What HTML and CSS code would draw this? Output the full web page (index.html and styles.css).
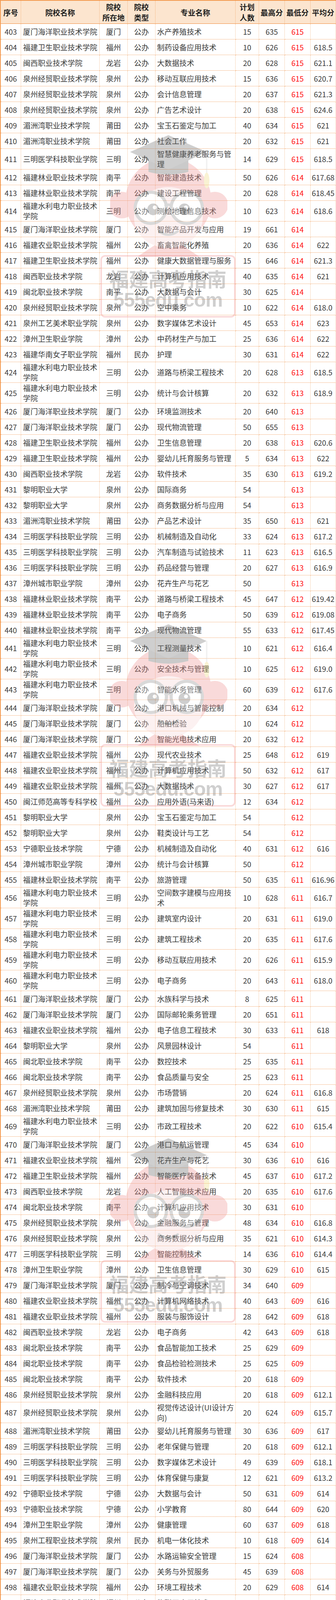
FILE: index.html
```html
<!DOCTYPE html>
<html lang="zh-CN">
<head>
<meta charset="utf-8">
<title>福建高职院校专业录取分数</title>
<link rel="stylesheet" href="styles.css">
</head>
<body>
<svg class="defs" width="0" height="0" aria-hidden="true">
  <defs>
    <symbol id="monkey" viewBox="0 0 300 315">
      <circle cx="30" cy="183" r="34" fill="#ee8e8e"/>
      <circle cx="268" cy="183" r="34" fill="#ee8e8e"/>
      <path d="M70 315 L149 262 L228 315 Z" fill="#ee8e8e"/>
      <circle cx="149" cy="172" r="110" fill="#ee8e8e"/>
      <ellipse cx="149" cy="215" rx="88" ry="78" fill="#f8d6d6"/>
      <circle cx="104" cy="190" r="40" fill="#fff" stroke="#8c8c8c" stroke-width="8"/>
      <circle cx="196" cy="190" r="40" fill="#fff" stroke="#8c8c8c" stroke-width="8"/>
      <path d="M140 186 Q149 178 158 186" fill="none" stroke="#8c8c8c" stroke-width="6"/>
      <circle cx="110" cy="194" r="15" fill="#6a6a6a"/>
      <circle cx="190" cy="194" r="15" fill="#6a6a6a"/>
      <circle cx="114" cy="189" r="5" fill="#fff"/>
      <circle cx="194" cy="189" r="5" fill="#fff"/>
      <path d="M125 250 Q149 268 173 250" fill="none" stroke="#8c8c8c" stroke-width="6" stroke-linecap="round"/>
      <path d="M98 40 L200 40 L200 98 Q149 112 98 98 Z" fill="#5e5e5e"/>
      <path d="M51 47 L149 4 L247 47 L149 92 Z" fill="#6e6e6e"/>
      <path d="M247 47 L247 112" stroke="#d8d8d8" stroke-width="4"/>
      <ellipse cx="247" cy="120" rx="7" ry="20" fill="#efd77a"/>
    </symbol>
  </defs>
</svg>
<div class="page">
<table class="score">
<colgroup>
<col class="c1"><col class="c2"><col class="c3"><col class="c4"><col class="c5"><col class="c6"><col class="c7"><col class="c8"><col class="c9">
</colgroup>
<thead>
<tr><th>序号</th><th>院校名称</th><th>院校<br>所在地</th><th>院校<br>类型</th><th>专业名称</th><th>计划<br>人数</th><th>最高分</th><th>最低分</th><th>平均分</th></tr>
</thead>
<tbody>
<tr><td>403</td><td>厦门海洋职业技术学院</td><td>厦门</td><td>公办</td><td>水产养殖技术</td><td>15</td><td>635</td><td>615</td><td></td></tr>
<tr><td>404</td><td>福建卫生职业技术学院</td><td>福州</td><td>公办</td><td>制药设备应用技术</td><td>10</td><td>626</td><td>615</td><td>618.5</td></tr>
<tr><td>405</td><td>闽西职业技术学院</td><td>龙岩</td><td>公办</td><td>大数据技术</td><td>20</td><td>628</td><td>615</td><td>621.1</td></tr>
<tr><td>406</td><td>泉州经贸职业技术学院</td><td>泉州</td><td>公办</td><td>移动互联应用技术</td><td>15</td><td>636</td><td>615</td><td>620.7</td></tr>
<tr><td>407</td><td>泉州经贸职业技术学院</td><td>泉州</td><td>公办</td><td>会计信息管理</td><td>20</td><td>637</td><td>615</td><td>621.3</td></tr>
<tr><td>408</td><td>泉州经贸职业技术学院</td><td>泉州</td><td>公办</td><td>广告艺术设计</td><td>20</td><td>638</td><td>615</td><td>624.6</td></tr>
<tr><td>409</td><td>湄洲湾职业技术学院</td><td>莆田</td><td>公办</td><td>宝玉石鉴定与加工</td><td>40</td><td>634</td><td>615</td><td>621</td></tr>
<tr><td>410</td><td>湄洲湾职业技术学院</td><td>莆田</td><td>公办</td><td>社会工作</td><td>20</td><td>632</td><td>615</td><td>621</td></tr>
<tr><td>411</td><td>三明医学科技职业学院</td><td>三明</td><td>公办</td><td>智慧健康养老服务与管理</td><td>14</td><td>629</td><td>615</td><td>618.5</td></tr>
<tr><td>412</td><td>福建林业职业技术学院</td><td>南平</td><td>公办</td><td>智能建造技术</td><td>50</td><td>626</td><td>614</td><td>617.68</td></tr>
<tr><td>413</td><td>福建林业职业技术学院</td><td>南平</td><td>公办</td><td>建设工程管理</td><td>20</td><td>628</td><td>614</td><td>618.45</td></tr>
<tr><td>414</td><td>福建水利电力职业技术学院</td><td>三明</td><td>公办</td><td>测绘地理信息技术</td><td>10</td><td>623</td><td>614</td><td>618.6</td></tr>
<tr><td>415</td><td>厦门海洋职业技术学院</td><td>厦门</td><td>公办</td><td>智能产品开发与应用</td><td>19</td><td>661</td><td>614</td><td></td></tr>
<tr><td>416</td><td>福建农业职业技术学院</td><td>福州</td><td>公办</td><td>畜禽智能化养殖</td><td>20</td><td>636</td><td>614</td><td>622</td></tr>
<tr><td>417</td><td>福建卫生职业技术学院</td><td>福州</td><td>公办</td><td>健康大数据管理与服务</td><td>15</td><td>646</td><td>614</td><td>621.3</td></tr>
<tr><td>418</td><td>闽西职业技术学院</td><td>龙岩</td><td>公办</td><td>计算机应用技术</td><td>40</td><td>635</td><td>614</td><td>621</td></tr>
<tr><td>419</td><td>闽北职业技术学院</td><td>南平</td><td>公办</td><td>大数据与会计</td><td>30</td><td>625</td><td>614</td><td></td></tr>
<tr><td>420</td><td>泉州经贸职业技术学院</td><td>泉州</td><td>公办</td><td>空中乘务</td><td>10</td><td>622</td><td>614</td><td>618.0</td></tr>
<tr><td>421</td><td>泉州工艺美术职业学院</td><td>泉州</td><td>公办</td><td>数字媒体艺术设计</td><td>45</td><td>653</td><td>614</td><td>623</td></tr>
<tr><td>422</td><td>漳州卫生职业学院</td><td>漳州</td><td>公办</td><td>中药材生产与加工</td><td>25</td><td>636</td><td>614</td><td>622</td></tr>
<tr><td>423</td><td>福建华南女子职业学院</td><td>福州</td><td>民办</td><td>护理</td><td>30</td><td>631</td><td>614</td><td>622</td></tr>
<tr><td>424</td><td>福建水利电力职业技术学院</td><td>三明</td><td>公办</td><td>道路与桥梁工程技术</td><td>20</td><td>628</td><td>613</td><td>618.5</td></tr>
<tr><td>425</td><td>福建水利电力职业技术学院</td><td>三明</td><td>公办</td><td>统计与会计核算</td><td>20</td><td>632</td><td>613</td><td>618.9</td></tr>
<tr><td>426</td><td>厦门海洋职业技术学院</td><td>厦门</td><td>公办</td><td>环境监测技术</td><td>20</td><td>640</td><td>613</td><td></td></tr>
<tr><td>427</td><td>厦门海洋职业技术学院</td><td>厦门</td><td>公办</td><td>现代物流管理</td><td>50</td><td>655</td><td>613</td><td></td></tr>
<tr><td>428</td><td>福建卫生职业技术学院</td><td>福州</td><td>公办</td><td>卫生信息管理</td><td>20</td><td>638</td><td>613</td><td>620.6</td></tr>
<tr><td>429</td><td>福建卫生职业技术学院</td><td>福州</td><td>公办</td><td>婴幼儿托育服务与管理</td><td>5</td><td>634</td><td>613</td><td>622</td></tr>
<tr><td>430</td><td>闽西职业技术学院</td><td>龙岩</td><td>公办</td><td>软件技术</td><td>35</td><td>630</td><td>613</td><td>619.2</td></tr>
<tr><td>431</td><td>黎明职业大学</td><td>泉州</td><td>公办</td><td>国际商务</td><td>54</td><td></td><td>613</td><td></td></tr>
<tr><td>432</td><td>黎明职业大学</td><td>泉州</td><td>公办</td><td>商务数据分析与应用</td><td>54</td><td></td><td>613</td><td></td></tr>
<tr><td>433</td><td>湄洲湾职业技术学院</td><td>莆田</td><td>公办</td><td>产品艺术设计</td><td>35</td><td>650</td><td>613</td><td>621</td></tr>
<tr><td>434</td><td>三明医学科技职业学院</td><td>三明</td><td>公办</td><td>机械制造及自动化</td><td>33</td><td>624</td><td>613</td><td>617.2</td></tr>
<tr><td>435</td><td>三明医学科技职业学院</td><td>三明</td><td>公办</td><td>汽车制造与试验技术</td><td>11</td><td>623</td><td>613</td><td>616.5</td></tr>
<tr><td>436</td><td>三明医学科技职业学院</td><td>三明</td><td>公办</td><td>药品经营与管理</td><td>20</td><td>627</td><td>613</td><td>616.9</td></tr>
<tr><td>437</td><td>漳州城市职业学院</td><td>漳州</td><td>公办</td><td>花卉生产与花艺</td><td>50</td><td></td><td>613</td><td></td></tr>
<tr><td>438</td><td>福建林业职业技术学院</td><td>南平</td><td>公办</td><td>道路与桥梁工程技术</td><td>45</td><td>647</td><td>612</td><td>619.42</td></tr>
<tr><td>439</td><td>福建林业职业技术学院</td><td>南平</td><td>公办</td><td>电子商务</td><td>50</td><td>639</td><td>612</td><td>619.08</td></tr>
<tr><td>440</td><td>福建林业职业技术学院</td><td>南平</td><td>公办</td><td>现代物流管理</td><td>55</td><td>633</td><td>612</td><td>617.45</td></tr>
<tr><td>441</td><td>福建水利电力职业技术学院</td><td>三明</td><td>公办</td><td>工程测量技术</td><td>10</td><td>621</td><td>612</td><td>616.4</td></tr>
<tr><td>442</td><td>福建水利电力职业技术学院</td><td>三明</td><td>公办</td><td>安全技术与管理</td><td>10</td><td>625</td><td>612</td><td>619.0</td></tr>
<tr><td>443</td><td>福建水利电力职业技术学院</td><td>三明</td><td>公办</td><td>智能水务管理</td><td>60</td><td>639</td><td>612</td><td>617.6</td></tr>
<tr><td>444</td><td>厦门海洋职业技术学院</td><td>厦门</td><td>公办</td><td>港口机械与智能控制</td><td>20</td><td>634</td><td>612</td><td></td></tr>
<tr><td>445</td><td>厦门海洋职业技术学院</td><td>厦门</td><td>公办</td><td>船舶检验</td><td>10</td><td>624</td><td>612</td><td></td></tr>
<tr><td>446</td><td>厦门海洋职业技术学院</td><td>厦门</td><td>公办</td><td>智能光电技术应用</td><td>20</td><td>632</td><td>612</td><td></td></tr>
<tr><td>447</td><td>福建农业职业技术学院</td><td>福州</td><td>公办</td><td>现代农业技术</td><td>25</td><td>648</td><td>612</td><td>619</td></tr>
<tr><td>448</td><td>福建农业职业技术学院</td><td>福州</td><td>公办</td><td>计算机应用技术</td><td>50</td><td>632</td><td>612</td><td>617</td></tr>
<tr><td>449</td><td>福建农业职业技术学院</td><td>福州</td><td>公办</td><td>大数据技术</td><td>30</td><td>627</td><td>612</td><td>617</td></tr>
<tr><td>450</td><td>闽江师范高等专科学校</td><td>福州</td><td>公办</td><td>应用外语(马来语)</td><td>12</td><td>634</td><td>612</td><td></td></tr>
<tr><td>451</td><td>黎明职业大学</td><td>泉州</td><td>公办</td><td>宝玉石鉴定与加工</td><td>54</td><td></td><td>612</td><td></td></tr>
<tr><td>452</td><td>黎明职业大学</td><td>泉州</td><td>公办</td><td>鞋类设计与工艺</td><td>54</td><td></td><td>612</td><td></td></tr>
<tr><td>453</td><td>宁德职业技术学院</td><td>宁德</td><td>公办</td><td>机械制造及自动化</td><td>40</td><td>631</td><td>612</td><td>616</td></tr>
<tr><td>454</td><td>漳州城市职业学院</td><td>漳州</td><td>公办</td><td>统计与会计核算</td><td>50</td><td></td><td>612</td><td></td></tr>
<tr><td>455</td><td>福建林业职业技术学院</td><td>南平</td><td>公办</td><td>旅游管理</td><td>50</td><td>635</td><td>611</td><td>616.96</td></tr>
<tr><td>456</td><td>福建水利电力职业技术学院</td><td>三明</td><td>公办</td><td>空间数字建模与应用技术</td><td>10</td><td>628</td><td>611</td><td>616.7</td></tr>
<tr><td>457</td><td>福建水利电力职业技术学院</td><td>三明</td><td>公办</td><td>建筑室内设计</td><td>20</td><td>631</td><td>611</td><td>619.0</td></tr>
<tr><td>458</td><td>福建水利电力职业技术学院</td><td>三明</td><td>公办</td><td>建筑工程技术</td><td>20</td><td>635</td><td>611</td><td>617.6</td></tr>
<tr><td>459</td><td>福建水利电力职业技术学院</td><td>三明</td><td>公办</td><td>移动互联应用技术</td><td>20</td><td>626</td><td>611</td><td>615.9</td></tr>
<tr><td>460</td><td>福建水利电力职业技术学院</td><td>三明</td><td>公办</td><td>电子商务</td><td>20</td><td>643</td><td>611</td><td>618.0</td></tr>
<tr><td>461</td><td>厦门海洋职业技术学院</td><td>厦门</td><td>公办</td><td>水族科学与技术</td><td>8</td><td>625</td><td>611</td><td></td></tr>
<tr><td>462</td><td>厦门海洋职业技术学院</td><td>厦门</td><td>公办</td><td>国际邮轮乘务管理</td><td>20</td><td>651</td><td>611</td><td></td></tr>
<tr><td>463</td><td>福建农业职业技术学院</td><td>福州</td><td>公办</td><td>电子信息工程技术</td><td>30</td><td>633</td><td>611</td><td>618</td></tr>
<tr><td>464</td><td>黎明职业大学</td><td>泉州</td><td>公办</td><td>风景园林设计</td><td>54</td><td></td><td>611</td><td></td></tr>
<tr><td>465</td><td>闽北职业技术学院</td><td>南平</td><td>公办</td><td>数控技术</td><td>25</td><td>635</td><td>611</td><td></td></tr>
<tr><td>466</td><td>闽北职业技术学院</td><td>南平</td><td>公办</td><td>食品质量与安全</td><td>25</td><td>623</td><td>611</td><td></td></tr>
<tr><td>467</td><td>泉州经贸职业技术学院</td><td>泉州</td><td>公办</td><td>市场营销</td><td>20</td><td>624</td><td>611</td><td>616.8</td></tr>
<tr><td>468</td><td>湄洲湾职业技术学院</td><td>莆田</td><td>公办</td><td>建筑加固与修复技术</td><td>30</td><td>630</td><td>611</td><td>615</td></tr>
<tr><td>469</td><td>福建水利电力职业技术学院</td><td>三明</td><td>公办</td><td>市政工程技术</td><td>20</td><td>622</td><td>610</td><td>615.4</td></tr>
<tr><td>470</td><td>厦门海洋职业技术学院</td><td>厦门</td><td>公办</td><td>港口与航运管理</td><td>45</td><td>634</td><td>610</td><td></td></tr>
<tr><td>471</td><td>福建农业职业技术学院</td><td>福州</td><td>公办</td><td>花卉生产与花艺</td><td>30</td><td>636</td><td>610</td><td>616</td></tr>
<tr><td>472</td><td>福建卫生职业技术学院</td><td>福州</td><td>公办</td><td>智能医疗装备技术</td><td>45</td><td>637</td><td>610</td><td>617.2</td></tr>
<tr><td>473</td><td>闽西职业技术学院</td><td>龙岩</td><td>公办</td><td>人工智能技术应用</td><td>20</td><td>635</td><td>610</td><td>617.6</td></tr>
<tr><td>474</td><td>闽北职业技术学院</td><td>南平</td><td>公办</td><td>计算机应用技术</td><td>30</td><td>631</td><td>610</td><td></td></tr>
<tr><td>475</td><td>泉州经贸职业技术学院</td><td>泉州</td><td>公办</td><td>金融服务与管理</td><td>48</td><td>634</td><td>610</td><td>616.8</td></tr>
<tr><td>476</td><td>泉州经贸职业技术学院</td><td>泉州</td><td>公办</td><td>商务数据分析与应用</td><td>35</td><td>621</td><td>610</td><td>614.3</td></tr>
<tr><td>477</td><td>三明医学科技职业学院</td><td>三明</td><td>公办</td><td>智能控制技术</td><td>14</td><td>636</td><td>610</td><td>614.4</td></tr>
<tr><td>478</td><td>漳州卫生职业学院</td><td>漳州</td><td>公办</td><td>卫生信息管理</td><td>30</td><td>629</td><td>610</td><td>615</td></tr>
<tr><td>479</td><td>厦门海洋职业技术学院</td><td>厦门</td><td>公办</td><td>制冷与空调技术</td><td>34</td><td>640</td><td>609</td><td></td></tr>
<tr><td>480</td><td>福建农业职业技术学院</td><td>福州</td><td>公办</td><td>计算机网络技术</td><td>40</td><td>643</td><td>609</td><td>616</td></tr>
<tr><td>481</td><td>福建农业职业技术学院</td><td>福州</td><td>公办</td><td>服装与服饰设计</td><td>28</td><td>642</td><td>609</td><td>618</td></tr>
<tr><td>482</td><td>闽西职业技术学院</td><td>龙岩</td><td>公办</td><td>电子商务</td><td>42</td><td>643</td><td>609</td><td>618</td></tr>
<tr><td>483</td><td>闽北职业技术学院</td><td>南平</td><td>公办</td><td>食品智能加工技术</td><td>25</td><td>629</td><td>609</td><td></td></tr>
<tr><td>484</td><td>闽北职业技术学院</td><td>南平</td><td>公办</td><td>食品检验检测技术</td><td>25</td><td>625</td><td>609</td><td></td></tr>
<tr><td>485</td><td>闽北职业技术学院</td><td>南平</td><td>公办</td><td>软件技术</td><td>20</td><td>618</td><td>609</td><td></td></tr>
<tr><td>486</td><td>泉州经贸职业技术学院</td><td>泉州</td><td>公办</td><td>金融科技应用</td><td>20</td><td>618</td><td>609</td><td>612.1</td></tr>
<tr><td>487</td><td>泉州经贸职业技术学院</td><td>泉州</td><td>公办</td><td>视觉传达设计(UI设计方向)</td><td>20</td><td>624</td><td>609</td><td>615.7</td></tr>
<tr><td>488</td><td>湄洲湾职业技术学院</td><td>莆田</td><td>公办</td><td>婴幼儿托育服务与管理</td><td>30</td><td>636</td><td>609</td><td>617</td></tr>
<tr><td>489</td><td>三明医学科技职业学院</td><td>三明</td><td>公办</td><td>老年保健与管理</td><td>20</td><td>618</td><td>609</td><td>612.1</td></tr>
<tr><td>490</td><td>三明医学科技职业学院</td><td>三明</td><td>公办</td><td>数字媒体艺术设计</td><td>49</td><td>639</td><td>609</td><td>618.1</td></tr>
<tr><td>491</td><td>三明医学科技职业学院</td><td>三明</td><td>公办</td><td>体育保健与康复</td><td>12</td><td>621</td><td>609</td><td>613.2</td></tr>
<tr><td>492</td><td>宁德职业技术学院</td><td>宁德</td><td>公办</td><td>大数据与会计</td><td>50</td><td>631</td><td>609</td><td>614</td></tr>
<tr><td>493</td><td>宁德职业技术学院</td><td>宁德</td><td>公办</td><td>小学教育</td><td>80</td><td>644</td><td>609</td><td>620</td></tr>
<tr><td>494</td><td>漳州卫生职业学院</td><td>漳州</td><td>公办</td><td>健康管理</td><td>60</td><td>637</td><td>609</td><td>618</td></tr>
<tr><td>495</td><td>泉州工程职业技术学院</td><td>泉州</td><td>民办</td><td>机电一体化技术</td><td>10</td><td>618</td><td>609</td><td>614</td></tr>
<tr><td>496</td><td>厦门海洋职业技术学院</td><td>厦门</td><td>公办</td><td>水路运输安全管理</td><td>15</td><td>624</td><td>608</td><td></td></tr>
<tr><td>497</td><td>厦门海洋职业技术学院</td><td>厦门</td><td>公办</td><td>关务与外贸服务</td><td>45</td><td>639</td><td>608</td><td></td></tr>
<tr><td>498</td><td>福建农业职业技术学院</td><td>福州</td><td>公办</td><td>环境工程技术</td><td>20</td><td>629</td><td>608</td><td>614</td></tr>
<tr><td>499</td><td>福建农业职业技术学院</td><td>福州</td><td>公办</td><td>物联网应用技术</td><td>30</td><td>630</td><td>608</td><td>613</td></tr>
<tr><td>500</td><td>福建农业职业技术学院</td><td>福州</td><td>公办</td><td>虚拟现实技术应用</td><td>30</td><td>630</td><td>608</td><td>615</td></tr>
<tr><td>501</td><td>福建农业职业技术学院</td><td>福州</td><td>公办</td><td>电子商务</td><td>40</td><td>625</td><td>608</td><td>613</td></tr>
<tr><td>502</td><td>福建卫生职业技术学院</td><td>福州</td><td>公办</td><td>公共卫生管理</td><td>25</td><td>629</td><td>608</td><td>615.2</td></tr>
<tr><td>503</td><td>福建艺术职业学院</td><td>福州</td><td>公办</td><td>艺术教育</td><td>30</td><td>646</td><td>608</td><td>617.3</td></tr>
<tr><td>504</td><td>闽江师范高等专科学校</td><td>福州</td><td>公办</td><td>应用外语(柬埔寨语)</td><td>12</td><td>635</td><td>608</td><td></td></tr>
<tr><td>505</td><td>泉州经贸职业技术学院</td><td>泉州</td><td>公办</td><td>导游</td><td>15</td><td>620</td><td>608</td><td>611.8</td></tr>
<tr><td>506</td><td>泉州工艺美术职业学院</td><td>泉州</td><td>公办</td><td>大数据与财务管理</td><td>30</td><td>619</td><td>608</td><td>612.4</td></tr>
<tr><td>507</td><td>漳州卫生职业学院</td><td>漳州</td><td>公办</td><td>婴幼儿托育服务与管理</td><td>10</td><td>614</td><td>608</td><td>611</td></tr>
<tr><td>508</td><td>漳州卫生职业学院</td><td>漳州</td><td>公办</td><td>老年保健与管理</td><td>40</td><td>628</td><td>608</td><td>618</td></tr>
<tr><td>509</td><td>福建水利电力职业技术学院</td><td>三明</td><td>公办</td><td>工程造价</td><td>65</td><td>625</td><td>607</td><td>611.7</td></tr>
<tr><td>510</td><td>福建农业职业技术学院</td><td>福州</td><td>公办</td><td>园林技术</td><td>30</td><td>655</td><td>607</td><td>616</td></tr>
<tr><td>511</td><td>福建农业职业技术学院</td><td>福州</td><td>公办</td><td>软件技术</td><td>120</td><td>651</td><td>607</td><td>612</td></tr>
<tr><td>512</td><td>福建卫生职业技术学院</td><td>福州</td><td>公办</td><td>医用电子仪器技术</td><td>45</td><td>635</td><td>607</td><td>613.5</td></tr>
<tr><td>513</td><td>福建艺术职业学院</td><td>福州</td><td>公办</td><td>民族传统技艺(古琴制作与修复方向)</td><td>5</td><td>633</td><td>607</td><td>617</td></tr>
<tr><td>514</td><td>闽西职业技术学院</td><td>龙岩</td><td>公办</td><td>环境工程技术</td><td>20</td><td>627</td><td>607</td><td>613.6</td></tr>
<tr><td>515</td><td>闽北职业技术学院</td><td>南平</td><td>公办</td><td>智能控制技术</td><td>40</td><td>620</td><td>607</td><td></td></tr>
<tr><td>516</td><td>漳州城市职业学院</td><td>漳州</td><td>公办</td><td>园艺技术</td><td>70</td><td></td><td>607</td><td></td></tr>
<tr><td>517</td><td>漳州城市职业学院</td><td>漳州</td><td>公办</td><td>文化创意与策划</td><td>45</td><td></td><td>607</td><td></td></tr>
<tr><td>518</td><td>福建水利电力职业技术学院</td><td>三明</td><td>公办</td><td>跨境电子商务</td><td>50</td><td>624</td><td>606</td><td>611.2</td></tr>
<tr><td>519</td><td>厦门海洋职业技术学院</td><td>厦门</td><td>公办</td><td>旅游管理</td><td>50</td><td>648</td><td>606</td><td></td></tr>
<tr><td>520</td><td>福建农业职业技术学院</td><td>福州</td><td>公办</td><td>园艺技术</td><td>30</td><td>626</td><td>606</td><td>612</td></tr>
<tr><td>521</td><td>福建农业职业技术学院</td><td>福州</td><td>公办</td><td>统计与会计核算</td><td>40</td><td>629</td><td>606</td><td>615</td></tr>
<tr><td>522</td><td>福建艺术职业学院</td><td>福州</td><td>公办</td><td>戏剧影视表演</td><td>5</td><td>647</td><td>606</td><td>619.4</td></tr>
<tr><td>523</td><td>闽西职业技术学院</td><td>龙岩</td><td>公办</td><td>应用化工技术</td><td>30</td><td>621</td><td>606</td><td>612.6</td></tr>
<tr><td>524</td><td>闽西职业技术学院</td><td>龙岩</td><td>公办</td><td>应用化工技术</td><td>20</td><td>621</td><td>606</td><td>612.6</td></tr>
<tr><td>525</td><td>闽西职业技术学院</td><td>龙岩</td><td>公办</td><td>工业互联网技术</td><td>30</td><td>628</td><td>606</td><td>613.2</td></tr>
<tr><td>526</td><td>黎明职业大学</td><td>泉州</td><td>公办</td><td>市政工程技术</td><td>54</td><td></td><td>606</td><td></td></tr>
<tr><td>527</td><td>闽北职业技术学院</td><td>南平</td><td>公办</td><td>融媒体技术与运营</td><td>30</td><td>630</td><td>606</td><td></td></tr>
<tr><td>528</td><td>三明医学科技职业学院</td><td>三明</td><td>公办</td><td>会计信息管理</td><td>25</td><td>613</td><td>606</td><td>608.6</td></tr>
<tr><td>529</td><td>福州英华职业学院</td><td>福州</td><td>民办</td><td>护理</td><td>50</td><td>627</td><td>606</td><td>614</td></tr>
<tr><td>530</td><td>福建农业职业技术学院</td><td>福州</td><td>公办</td><td>现代物流管理</td><td>40</td><td>625</td><td>605</td><td>610</td></tr>
<tr><td>531</td><td>福建农业职业技术学院</td><td>福州</td><td>公办</td><td>艺术设计</td><td>39</td><td>643</td><td>605</td><td>613</td></tr>
<tr><td>532</td><td>福建艺术职业学院</td><td>福州</td><td>公办</td><td>服装与服饰设计</td><td>50</td><td>648</td><td>605</td><td>615.1</td></tr>
<tr><td>533</td><td>闽西职业技术学院</td><td>龙岩</td><td>公办</td><td>电子信息工程技术</td><td>20</td><td>635</td><td>605</td><td>614.5</td></tr>
<tr><td>534</td><td>闽西职业技术学院</td><td>龙岩</td><td>公办</td><td>人力资源管理</td><td>25</td><td>624</td><td>605</td><td>614.1</td></tr>
<tr><td>535</td><td>闽北职业技术学院</td><td>南平</td><td>公办</td><td>虚拟现实技术应用</td><td>25</td><td>612</td><td>605</td><td></td></tr>
<tr><td>536</td><td>三明医学科技职业学院</td><td>三明</td><td>公办</td><td>视觉传达设计</td><td>11</td><td>620</td><td>605</td><td>610</td></tr>
<tr><td>537</td><td>宁德职业技术学院</td><td>宁德</td><td>公办</td><td>数字化设计与制造技术</td><td>30</td><td>631</td><td>605</td><td>610</td></tr>
<tr><td>538</td><td>漳州城市职业学院</td><td>漳州</td><td>公办</td><td>园林技术</td><td>50</td><td></td><td>605</td><td></td></tr>
<tr><td>539</td><td>漳州城市职业学院</td><td>漳州</td><td>公办</td><td>广告艺术设计</td><td>45</td><td></td><td>605</td><td></td></tr>
<tr><td>540</td><td>漳州卫生职业学院</td><td>漳州</td><td>公办</td><td>运动防护</td><td>30</td><td>623</td><td>605</td><td>612</td></tr>
<tr><td>541</td><td>福建农业职业技术学院</td><td>福州</td><td>公办</td><td>建筑工程技术</td><td>15</td><td>622</td><td>604</td><td>609</td></tr>
<tr><td>542</td><td>福建艺术职业学院</td><td>福州</td><td>公办</td><td>茶艺与茶文化</td><td>35</td><td>639</td><td>604</td><td>610.7</td></tr>
<tr><td>543</td><td>福建艺术职业学院</td><td>福州</td><td>公办</td><td>文物修复与保护</td><td>35</td><td>638</td><td>604</td><td>612.8</td></tr>
<tr><td>544</td><td>泉州幼儿师范高等专科学校</td><td>泉州</td><td>公办</td><td>特殊教育</td><td>50</td><td>635</td><td>604</td><td>612.7</td></tr>
<tr><td>545</td><td>闽西职业技术学院</td><td>龙岩</td><td>公办</td><td>建筑工程技术</td><td>30</td><td>620</td><td>604</td><td>608.3</td></tr>
<tr><td>546</td><td>闽西职业技术学院</td><td>龙岩</td><td>公办</td><td>老年保健与管理</td><td>30</td><td>630</td><td>604</td><td>611.5</td></tr>
<tr><td>547</td><td>闽西职业技术学院</td><td>龙岩</td><td>公办</td><td>社会工作</td><td>25</td><td>620</td><td>604</td><td>610.4</td></tr>
<tr><td>548</td><td>黎明职业大学</td><td>泉州</td><td>公办</td><td>建筑工程技术</td><td>54</td><td></td><td>604</td><td></td></tr>
<tr><td>549</td><td>黎明职业大学</td><td>泉州</td><td>公办</td><td>纺织材料与应用</td><td>54</td><td></td><td>604</td><td></td></tr>
<tr><td>550</td><td>闽北职业技术学院</td><td>南平</td><td>公办</td><td>移动应用开发</td><td>20</td><td>619</td><td>604</td><td></td></tr>
<tr><td>551</td><td>泉州工艺美术职业学院</td><td>泉州</td><td>公办</td><td>视觉传达设计</td><td>50</td><td>636</td><td>604</td><td>611.2</td></tr>
<tr><td>552</td><td>福建农业职业技术学院</td><td>福州</td><td>公办</td><td>设施农业与装备</td><td>15</td><td>640</td><td>603</td><td>613</td></tr>
<tr><td>553</td><td>福建农业职业技术学院</td><td>福州</td><td>公办</td><td>现代农业经济管理</td><td>40</td><td>619</td><td>603</td><td>607</td></tr>
<tr><td>554</td><td>福建农业职业技术学院</td><td>福州</td><td>公办</td><td>现代通信技术</td><td>140</td><td>633</td><td>603</td><td>608</td></tr>
<tr><td>555</td><td>福建农业职业技术学院</td><td>福州</td><td>公办</td><td>市场营销</td><td>40</td><td>636</td><td>603</td><td>611</td></tr>
<tr><td>556</td><td>福建农业职业技术学院</td><td>福州</td><td>公办</td><td>茶艺与茶文化</td><td>30</td><td>624</td><td>603</td><td>608</td></tr>
<tr><td>557</td><td>闽西职业技术学院</td><td>龙岩</td><td>公办</td><td>建筑室内设计</td><td>20</td><td>624</td><td>603</td><td>610.4</td></tr>
<tr><td>558</td><td>闽北职业技术学院</td><td>南平</td><td>公办</td><td>建筑室内设计</td><td>20</td><td>644</td><td>603</td><td></td></tr>
<tr><td>559</td><td>闽北职业技术学院</td><td>南平</td><td>公办</td><td>电子商务</td><td>20</td><td>609</td><td>603</td><td></td></tr>
<tr><td>560</td><td>三明医学科技职业学院</td><td>三明</td><td>公办</td><td>电子商务</td><td>30</td><td>620</td><td>603</td><td>607.7</td></tr>
<tr><td>561</td><td>三明医学科技职业学院</td><td>三明</td><td>公办</td><td>餐饮智能管理</td><td>24</td><td>631</td><td>603</td><td>609.6</td></tr>
<tr><td>562</td><td>三明医学科技职业学院</td><td>三明</td><td>公办</td><td>学前教育</td><td>9</td><td>619</td><td>603</td><td>608</td></tr>
<tr><td>563</td><td>漳州城市职业学院</td><td>漳州</td><td>公办</td><td>学前教育</td><td>49</td><td></td><td>603</td><td></td></tr>
<tr><td>564</td><td>厦门海洋职业技术学院</td><td>厦门</td><td>公办</td><td>环境管理与评价</td><td>8</td><td>644</td><td>602</td><td></td></tr>
<tr><td>565</td><td>福建农业职业技术学院</td><td>福州</td><td>公办</td><td>智能建造技术</td><td>15</td><td>622</td><td>602</td><td>609</td></tr>
<tr><td>566</td><td>闽西职业技术学院</td><td>龙岩</td><td>公办</td><td>风景园林设计</td><td>45</td><td>619</td><td>602</td><td>609.1</td></tr>
<tr><td>567</td><td>闽西职业技术学院</td><td>龙岩</td><td>公办</td><td>网络营销与直播电商</td><td>42</td><td>637</td><td>602</td><td>613.2</td></tr>
<tr><td>568</td><td>泉州工艺美术职业学院</td><td>泉州</td><td>公办</td><td>休闲服务与管理</td><td>20</td><td>613</td><td>602</td><td>605.5</td></tr>
<tr><td>569</td><td>三明医学科技职业学院</td><td>三明</td><td>公办</td><td>人力资源管理</td><td>25</td><td>615</td><td>602</td><td>606.7</td></tr>
<tr><td>570</td><td>宁德职业技术学院</td><td>宁德</td><td>公办</td><td>物联网应用技术</td><td>110</td><td>619</td><td>602</td><td>606</td></tr>
<tr><td>571</td><td>漳州城市职业学院</td><td>漳州</td><td>公办</td><td>研学旅行管理与服务</td><td>50</td><td></td><td>602</td><td></td></tr>
<tr><td>572</td><td>福建艺术职业学院</td><td>福州</td><td>公办</td><td>会展策划与管理</td><td>35</td><td>635</td><td>601</td><td>609.5</td></tr>
<tr><td>573</td><td>闽北职业技术学院</td><td>南平</td><td>公办</td><td>婴幼儿托育服务与管理</td><td>25</td><td>623</td><td>601</td><td></td></tr>
<tr><td>574</td><td>闽北职业技术学院</td><td>南平</td><td>公办</td><td>旅游管理</td><td>25</td><td>611</td><td>601</td><td></td></tr>
<tr><td>575</td><td>泉州工艺美术职业学院</td><td>泉州</td><td>公办</td><td>增材制造技术</td><td>10</td><td>619</td><td>601</td><td>607.9</td></tr>
<tr><td>576</td><td>三明医学科技职业学院</td><td>三明</td><td>公办</td><td>环境监测技术</td><td>40</td><td>611</td><td>601</td><td>605</td></tr>
<tr><td>577</td><td>三明医学科技职业学院</td><td>三明</td><td>公办</td><td>现代物流管理</td><td>22</td><td>628</td><td>601</td><td>606.5</td></tr>
<tr><td>578</td><td>三明医学科技职业学院</td><td>三明</td><td>公办</td><td>酒店管理与数字化运营</td><td>21</td><td>630</td><td>601</td><td>607.8</td></tr>
<tr><td>579</td><td>漳州城市职业学院</td><td>漳州</td><td>公办</td><td>室内艺术设计</td><td>45</td><td></td><td>601</td><td></td></tr>
<tr><td>580</td><td>漳州城市职业学院</td><td>漳州</td><td>公办</td><td>早期教育</td><td>49</td><td></td><td>601</td><td></td></tr>
<tr><td>581</td><td>福建艺术职业学院</td><td>福州</td><td>公办</td><td>民族服装与饰品</td><td>10</td><td>611</td><td>600</td><td>604.7</td></tr>
<tr><td>582</td><td>泉州工艺美术职业学院</td><td>泉州</td><td>公办</td><td>工业设计</td><td>30</td><td>619</td><td>600</td><td>604.5</td></tr>
<tr><td>583</td><td>泉州工艺美术职业学院</td><td>泉州</td><td>公办</td><td>工商企业管理</td><td>20</td><td>613</td><td>600</td><td>605</td></tr>
<tr><td>584</td><td>泉州工艺美术职业学院</td><td>泉州</td><td>公办</td><td>室内艺术设计</td><td>40</td><td>6119</td><td>600</td><td>607.1</td></tr>
<tr><td>585</td><td>泉州工艺美术职业学院</td><td>泉州</td><td>公办</td><td>摄影与摄像艺术</td><td>40</td><td>636</td><td>600</td><td>606.4</td></tr>
</tbody>
</table>

<div class="overlay" aria-hidden="true">
  <svg class="monkey m1"><use href="#monkey"/></svg>
  <div class="brand b1"><span class="bn">福建高考指南</span><span class="bu">555edu.com</span></div>
  <svg class="monkey m2"><use href="#monkey"/></svg>
  <div class="brand b2"><span class="bn">福建高考指南</span><span class="bu">555edu.com</span></div>
  <svg class="monkey m3"><use href="#monkey"/></svg>
  <div class="brand b3"><span class="bn">福建高考指南</span><span class="bu">555edu.com</span></div>
  <svg class="monkey m4"><use href="#monkey"/></svg>
  <div class="brand b4"><span class="bn">福建高考指南</span><span class="bu">555edu.com</span></div>
  <svg class="monkey m5"><use href="#monkey"/></svg>
  <div class="brand b5"><span class="bn">福建高考指南</span><span class="bu">555edu.com</span></div>
  <svg class="monkey m6"><use href="#monkey"/></svg>
  <div class="brand b6"><span class="bn">福建高考指南</span><span class="bu">555edu.com</span></div>
</div>
</div>
</body>
</html>
```

FILE: styles.css
```css
html, body {
  margin: 0;
  padding: 0;
  background: #ffffff;
}

.defs {
  position: absolute;
  width: 0;
  height: 0;
  overflow: hidden;
}

.page {
  position: relative;
  width: 860px;
  overflow: hidden;
}

.score {
  width: 860px;
  table-layout: fixed;
  border-collapse: separate;
  border-spacing: 0;
  border-top: 2px solid #f39a50;
  border-left: 2px solid #f39a50;
  border-bottom: 4px solid #f2592b;
  font-family: "Noto Sans CJK SC", sans-serif;
  font-size: 19px;
  color: #3a3a3a;
}

.c1 { width: 52px; }
.c2 { width: 201px; }
.c3 { width: 72px; }
.c4 { width: 71px; }
.c5 { width: 205px; }
.c6 { width: 60px; }
.c7 { width: 66px; }
.c8 { width: 66px; }
.c9 { width: 65px; }

.score th {
  box-sizing: content-box;
  height: 58px;
  padding: 0 2px;
  background: #fce5cf;
  border-bottom: 1px solid #f08a3a;
  border-right: 1px dotted #f0a565;
  font-weight: bold;
  line-height: 27px;
  color: #1e1e1e;
  text-align: center;
  vertical-align: middle;
  white-space: nowrap;
}

.score td {
  box-sizing: content-box;
  height: 39px;
  padding: 0 4px;
  border-bottom: 1px dotted #ee8a3c;
  border-right: 1px dotted #f0b07a;
  line-height: 26px;
  text-align: center;
  vertical-align: middle;
  word-break: break-all;
}

.score td:nth-child(2) {
  text-align: left;
  padding-left: 5px;
  padding-right: 3px;
}

.score td:nth-child(5) {
  text-align: left;
  padding-left: 4px;
  padding-right: 3px;
}

.score td:nth-child(8) {
  color: #ff1010;
}

.score td:nth-child(6),
.score td:nth-child(7),
.score td:nth-child(9) {
  padding: 0 1px;
}

.overlay {
  position: absolute;
  left: 0;
  top: 0;
  width: 860px;
  height: 100%;
  pointer-events: none;
}

.monkey {
  position: absolute;
  left: 282px;
  width: 300px;
  height: 315px;
  opacity: 0.32;
}

.m1 { top: 342px; }
.m2 { top: 1594px; }
.m3 { top: 2910px; }
.m4 { top: 4124px; }
.m5 { top: 5363px; }
.m6 { top: 6590px; }

.brand {
  position: absolute;
  left: 257px;
  width: 346px;
  height: 160px;
  box-sizing: border-box;
  border: 4px solid rgba(236, 120, 120, 0.28);
  border-radius: 12px;
  display: flex;
  flex-direction: column;
  align-items: center;
  padding-top: 26px;
  color: rgba(130, 130, 130, 0.38);
  font-weight: bold;
}

.b1 { top: 653px; }
.b2 { top: 1905px; }
.b3 { top: 3226px; }
.b4 { top: 4437px; }
.b5 { top: 5679px; }
.b6 { top: 6888px; }

.bn {
  font-family: "Noto Sans CJK SC", sans-serif;
  font-size: 50px;
  line-height: 58px;
}

.bu {
  font-family: "Liberation Sans", Arial, sans-serif;
  font-size: 50px;
  line-height: 54px;
  letter-spacing: -1px;
}
```
